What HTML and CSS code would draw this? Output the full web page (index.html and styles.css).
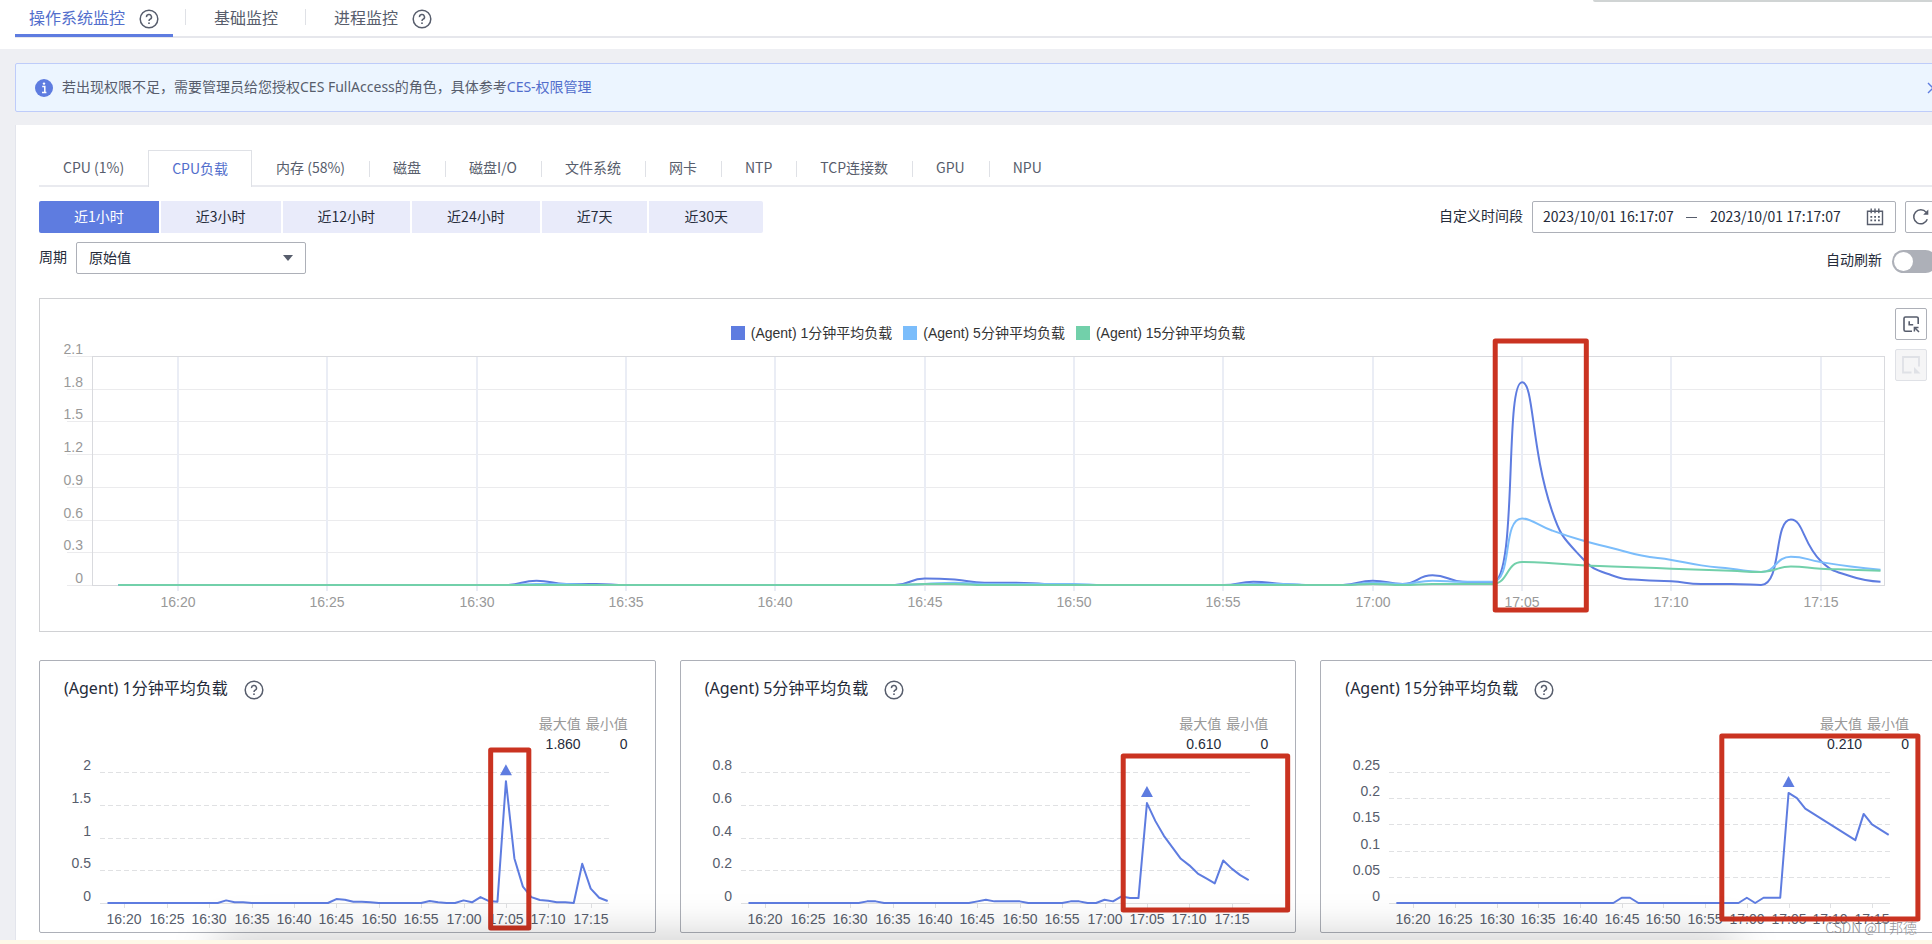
FILE: index.html
```html
<!DOCTYPE html>
<html lang="zh-CN">
<head>
<meta charset="utf-8">
<title>操作系统监控</title>
<link rel="stylesheet" href="styles.css">
</head>
<body>
<svg class="sprite" aria-hidden="true">
  <symbol id="help" viewBox="0 0 20 20">
    <circle cx="10" cy="10" r="8.8" fill="none" stroke="currentColor" stroke-width="1.5"/>
    <path d="M7.5 8.1a2.5 2.5 0 1 1 3.7 2.1c-.8.5-1.2.9-1.2 1.9" fill="none" stroke="currentColor" stroke-width="1.5"/>
    <circle cx="10" cy="14.2" r=".9" fill="currentColor"/>
  </symbol>
</svg>
<div class="float-edge"></div>
<div class="page">
  <header class="top">
    <nav class="top-tabs">
      <a class="top-tab active" href="#os">操作系统监控<svg class="help"><use href="#help"/></svg></a>
      <a class="top-tab" href="#basic">基础监控</a>
      <a class="top-tab" href="#process">进程监控<svg class="help"><use href="#help"/></svg></a>
    </nav>
  </header>

  <main class="content">
    <div class="notice">
      <svg class="info" viewBox="0 0 18 18"><circle cx="9" cy="9" r="9" fill="#5e7ce0"/><circle cx="9" cy="4.6" r="1.2" fill="#fff"/><path d="M7.2 7.6h2.6v5.6M7 13.4h4.400" fill="none" stroke="#fff" stroke-width="1.5"/></svg>
      <p>若出现权限不足，需要管理员给您授权CES FullAccess的角色，具体参考<a href="#ces">CES-权限管理</a></p>
      <button class="close" aria-label="关闭"><svg viewBox="0 0 12 12"><path d="M1 1l10 10M11 1L1 11" stroke="#5e7ce0" stroke-width="1.4"/></svg></button>
    </div>

    <section class="card">
      <ul class="metric-tabs">
        <li><button>CPU (1%)</button></li>
        <li class="active"><button>CPU负载</button></li>
        <li><button>内存 (58%)</button></li>
        <li><button>磁盘</button></li>
        <li><button>磁盘I/O</button></li>
        <li><button>文件系统</button></li>
        <li><button>网卡</button></li>
        <li><button>NTP</button></li>
        <li><button>TCP连接数</button></li>
        <li><button>GPU</button></li>
        <li><button>NPU</button></li>
      </ul>

      <div class="toolbar">
        <div class="ranges">
          <button class="active">近1小时</button>
          <button>近3小时</button>
          <button>近12小时</button>
          <button>近24小时</button>
          <button>近7天</button>
          <button>近30天</button>
        </div>
        <div class="custom">
          <label for="from">自定义时间段</label>
          <div class="dates">
            <input id="from" type="text" value="2023/10/01 16:17:07">
            <span class="dash"></span>
            <input id="to" type="text" value="2023/10/01 17:17:07" aria-label="结束时间">
            <svg class="calendar" viewBox="0 0 18 18" fill="none" stroke="#575d6c"><path d="M1.5 3.2h15v13.3h-15zM5.2.6v4.6M9 .6v4.6M12.8.6v4.6" stroke-width="1.4"/><path d="M4.4 8.8h9.4M4.4 12.4h9.4" stroke-width="1.7" stroke-dasharray="1.8 2"/></svg>
          </div>
          <button class="refresh" aria-label="刷新"><svg viewBox="0 0 18 18"><path d="M15.3 11.3A7 7 0 1 1 14.2 4.400" fill="none" stroke="#575d6c" stroke-width="1.5"/><path d="M16.300 1.600v5.100h-5.100z" fill="#575d6c"/></svg></button>
        </div>
      </div>

      <div class="options">
        <div class="period">
          <label for="period">周期</label>
          <div class="select">
            <select id="period"><option>原始值</option></select>
            <svg viewBox="0 0 10 6"><path d="M0 0h10L5 6z" fill="#575d6c"/></svg>
          </div>
        </div>
        <div class="auto">
          <label for="auto">自动刷新</label>
          <input id="auto" type="checkbox" role="switch">
        </div>
      </div>

      <div class="overview">
        <ul class="legend">
          <li><i class="s1"></i>(Agent) 1分钟平均负载</li>
          <li><i class="s5"></i>(Agent) 5分钟平均负载</li>
          <li><i class="s15"></i>(Agent) 15分钟平均负载</li>
        </ul>
        <svg class="chart chart-main" id="chart-main"></svg>
        <div class="tools">
          <button aria-label="区域缩放"><svg viewBox="0 0 18 18" fill="none" stroke="#575d6c"><path d="M10 16.200H3.500a1.500 1.500 0 0 1-1.500-1.500V3.500A1.500 1.500 0 0 1 3.500 2h11.200a1.500 1.500 0 0 1 1.500 1.500V9M7.200 6.200v3.600h4" stroke-width="1.600"/><path d="M12.500 12.500l4.500 4.500M16.500 12.400h-4.100v4.100" stroke-width="1.500"/></svg></button>
          <button aria-label="区域缩放还原" disabled><svg viewBox="0 0 20 20"><path d="M10.500 17.500H2V2h16v9.500" fill="none" stroke="#dfe1e6" stroke-width="1.800"/><path d="M13 12l6.500 6.500H13z" fill="#dfe1e6"/></svg></button>
        </div>
      </div>

      <div class="details">
        <article class="detail">
          <h2>(Agent) 1分钟平均负载<svg class="help"><use href="#help"/></svg></h2>
          <table><thead><tr><th>最大值</th><th>最小值</th></tr></thead><tbody><tr><td>1.860</td><td>0</td></tr></tbody></table>
          <svg class="chart chart-small" id="chart-1"></svg>
        </article>
        <article class="detail">
          <h2>(Agent) 5分钟平均负载<svg class="help"><use href="#help"/></svg></h2>
          <table><thead><tr><th>最大值</th><th>最小值</th></tr></thead><tbody><tr><td>0.610</td><td>0</td></tr></tbody></table>
          <svg class="chart chart-small" id="chart-5"></svg>
        </article>
        <article class="detail">
          <h2>(Agent) 15分钟平均负载<svg class="help"><use href="#help"/></svg></h2>
          <table><thead><tr><th>最大值</th><th>最小值</th></tr></thead><tbody><tr><td>0.210</td><td>0</td></tr></tbody></table>
          <svg class="chart chart-small" id="chart-15"></svg>
        </article>
      </div>
    </section>
  </main>
</div>
<footer class="strip"></footer>
<div class="watermark">CSDN @IT邦德</div>
<script src="charts.js"></script>
</body>
</html>
```

FILE: styles.css
```css
* { box-sizing: border-box; }

body {
  position: relative;
  min-height: 100vh;
  margin: 0;
  overflow: hidden;
  background: #eeeff3;
  color: #252b3a;
  font: 14px/20px "Noto Sans CJK SC", "Noto Sans", sans-serif;
}

ul, p, h2 { margin: 0; padding: 0; list-style: none; }
a { color: #526ecc; text-decoration: none; }
button, input, select { margin: 0; padding: 0; border: 0; background: none; color: inherit; font: inherit; }
svg { display: block; }

.sprite { position: absolute; width: 0; height: 0; }

.float-edge {
  position: absolute;
  top: 0;
  right: 0;
  width: 339px;
  height: 2px;
  border-bottom-left-radius: 4px;
  background: #d0d4d4;
}

/* The content area runs past the right side of the window. */
.page { margin-right: -28px; }

.top { height: 49px; padding-left: 15px; background: #fff; }
.top-tabs { display: flex; height: 38px; border-bottom: 2px solid #e6e7ec; }
.top-tab { display: flex; align-items: center; gap: 14px; height: 37px; padding: 0 27px 3px 28px; color: #575d6c; font-size: 16px; line-height: 24px; }
.top-tab::before { content: ""; width: 1px; height: 16px; margin: 0 14px 0 -29px; background: #dfe1e6; }
.top-tab + .top-tab { padding-left: 29px; }
.top-tab:nth-child(2) { margin-left: 12px; }
.top-tab.active { padding: 0 14px 3px; box-shadow: inset 0 -3px #5e7ce0; color: #526ecc; }
.top-tab.active::before { display: none; }
.help { flex: none; width: 20px; height: 20px; margin-top: 3px; color: #575d6c; }

.content { padding: 14px 0 0 15px; }

.notice { display: flex; align-items: center; height: 49px; margin-bottom: 13px; padding: 0 20px 0 19px; border: 1px solid #beccfa; border-radius: 2px; background: #ecf5ff; color: #575d6c; font-family: "Noto Sans", "Noto Sans CJK SC", sans-serif; }
.notice p { padding-bottom: 2px; }
.info { width: 18px; height: 18px; margin-right: 9px; }
.close { margin-left: auto; }
.close svg { width: 12px; height: 12px; }

.card { padding: 25px 23px 7px; border-left: 1px solid #e3e5ec; background: #fff; }

.metric-tabs { display: flex; height: 37px; border-bottom: 2px solid #e9eaef; color: #575d6c; }
.metric-tabs li { display: flex; align-items: center; height: 37px; }
.metric-tabs li::before { content: ""; width: 1px; height: 16px; margin-right: -1px; background: #dfe1e6; }
.metric-tabs li:nth-child(-n+3)::before { display: none; }
.metric-tabs button { height: 36px; padding: 0 24px 3px; }
.metric-tabs li.active { border: 1px solid #dfe1e6; border-bottom: 0; background: #fff; color: #526ecc; }
.metric-tabs li.active button { padding: 0 23px 3px; }

.toolbar, .options { display: flex; justify-content: space-between; }
.toolbar { margin-top: 14px; }
.ranges { display: flex; gap: 2px; }
.ranges button { height: 32px; padding: 0 35px 2px; background: #e9ebfa; }
.ranges button.active { border-radius: 2px 0 0 2px; background: #5e7ce0; color: #fff; }
.ranges button:last-child { border-radius: 0 2px 2px 0; }

.custom { display: flex; gap: 9px; }
.custom label { line-height: 28px; }
.dates { display: flex; align-items: center; width: 364px; height: 32px; padding: 0 11px 0 10px; border: 1px solid #adb0b8; border-radius: 2px; }
.dates input { width: 134px; height: 28px; padding-bottom: 2px; }
.dates .dash { width: 11px; height: 1px; margin: 0 13px 0 9px; background: #575d6c; }
.calendar { width: 18px; height: 18px; margin-left: auto; }
.refresh { display: grid; place-items: center; width: 32px; height: 32px; border: 1px solid #adb0b8; border-radius: 2px; }
.refresh svg { width: 18px; height: 18px; }

.options { margin-top: 9px; }
.period { display: flex; gap: 9px; }
.period label { line-height: 28px; }
.select { display: flex; align-items: center; width: 230px; height: 32px; border: 1px solid #adb0b8; border-radius: 2px; }
.select select { flex: 1; height: 30px; margin-right: -22px; padding: 0 32px 2px 12px; appearance: none; }
.select svg { width: 10px; height: 6px; margin-right: 12px; pointer-events: none; }
.auto { display: flex; gap: 10px; padding-top: 8px; }
.auto label { line-height: 18px; }
.auto input { display: flex; align-items: center; width: 45px; height: 23px; padding: 2px; border-radius: 12px; background: #adb0b8; appearance: none; }
.auto input::before { content: ""; width: 19px; height: 19px; border-radius: 50%; background: #fff; }

.overview { position: relative; margin-top: 24px; padding-top: 24px; border: 1px solid #d0d1d4; }
.legend { display: flex; justify-content: center; gap: 11px; color: #333; font-family: "Liberation Sans", "Noto Sans CJK SC", sans-serif; }
.legend li { display: flex; align-items: center; gap: 6px; }
.legend i { width: 14px; height: 14px; }
.s1 { background: #5e7ce0; }
.s5 { background: #7bbdfb; }
.s15 { background: #72d0aa; }
.tools { position: absolute; top: 9px; right: 9px; display: grid; gap: 9px; }
.tools button { display: grid; place-items: center; width: 32px; height: 32px; border: 1px solid #adb0b8; border-radius: 2px; }
.tools button:disabled { border-color: #dfe1e6; background: #f5f5f6; }
.tools svg { width: 18px; height: 18px; }
.tools button:disabled svg { width: 20px; height: 20px; }

.details { display: grid; grid-template-columns: repeat(3, minmax(0, 1fr)); gap: 24px; margin-top: 28px; }
.detail { padding-top: 15px; border: 1px solid #adb0b8; border-radius: 2px; }
.detail h2 { display: flex; align-items: center; gap: 16px; padding-left: 24px; font-family: "Noto Sans", "Noto Sans CJK SC", sans-serif; font-size: 16px; font-weight: 400; line-height: 24px; }
.detail table { margin: 14px 27px 0 auto; border-collapse: collapse; font-family: "Liberation Sans", "Noto Sans CJK SC", sans-serif; text-align: right; }
.detail th, .detail td { height: 20px; padding: 0 0 0 5px; line-height: 20px; }
.detail th { color: #999; font-weight: 400; }

.chart { width: 100%; overflow: visible; font-family: "Liberation Sans", sans-serif; font-size: 14px; }
.chart-main { height: 288px; }
.chart-small { height: 178px; }
.chart text { fill: #575d6c; }
.chart-main text { fill: #999; }
.chart line { stroke: #e0e1e3; shape-rendering: crispEdges; }
.chart .dashed { stroke-dasharray: 5 3; }
.chart-main line { stroke: #ebebed; }
.chart-main .column { stroke: #eaedf5; stroke-width: 2; }
.chart .frame { fill: none; stroke: #d9dade; shape-rendering: crispEdges; }
.chart .series { fill: none; stroke-width: 2; stroke-linejoin: round; }
.chart .peak { fill: #5e7ce0; }
.chart .mark { fill: none; stroke: #ca3321; stroke-width: 5; stroke-linejoin: round; }

.strip { position: relative; height: 4px; background: #fef9e8; }
.strip::before { content: ""; position: absolute; inset: 4px 200px 0 220px; height: 20px; box-shadow: 0 0 44px 4px rgba(0, 0, 0, .28); }
.strip::after { content: ""; position: absolute; inset: 0; background: #fef9e8; }

.watermark { position: absolute; right: 15px; bottom: 7px; color: #8d8d92; font: 14px/20px "Noto Sans CJK SC", sans-serif; font-weight: 300; }
```

FILE: charts.js
```javascript
const COUNT = 60;          // one sample per minute, 16:18 to 17:17
const FIRST_OFFSET = 0.883; // minutes between the range start and the first sample

function series(values) {
  const out = new Array(COUNT).fill(0);
  for (const [start, list] of values) list.forEach((v, i) => { out[start + i] = v; });
  return out;
}

const load1 = series([[14, [.04, .01, .01]], [27, [.06, .05, .02, .02, .01]], [38, [.03, .01]],
  [42, [.04, .01, .09, .03, .02, 1.86, .68, .25, .09, .045, .035, .01, .01, 0, .6, .22, .08, .03]]]);
const load5 = series([[14, [.01, .01]], [27, [.01, .02, .01, .01, .01, .01]], [38, [.01, .01]],
  [42, [.02, .01, .04, .03, .03, .61, .5, .41, .34, .27, .23, .18, .15, .12, .26, .21, .17, .14]]]);
const load15 = series([[27, [.01, .01]],
  [42, [.01, 0, .01, .01, .01, .21, .2, .18, .17, .16, .15, .14, .13, .12, .17, .15, .14, .13]]]);

function straight(p) {
  return 'M' + p.map(q => q.join(' ')).join('L');
}

/* Rounded curve whose control points never leave the span of their neighbours. */
function smooth(p) {
  const within = (v, a, b) => Math.max(Math.min(v, Math.max(a, b)), Math.min(a, b));
  let d = 'M' + p[0].join(' ');
  let out = p[0];
  for (let i = 1; i < p.length; i++) {
    const a = p[i - 1], b = p[i], c = p[i + 1];
    let inn = b, next = b;
    if (c) {
      const la = Math.hypot(b[0] - a[0], b[1] - a[1]);
      const lc = Math.hypot(c[0] - b[0], c[1] - b[1]);
      const k = 0.5 * lc / (la + lc);
      next = [0, 1].map(n => within(b[n] + (c[n] - a[n]) * k, b[n], c[n]));
      inn = [0, 1].map(n => within(b[n] - (next[n] - b[n]) * la / lc, a[n], b[n]));
      next = [0, 1].map(n => within(b[n] + (b[n] - inn[n]) * lc / la, b[n], c[n]));
    }
    d += 'C' + [...out, ...inn, ...b].join(' ');
    out = next;
  }
  return d;
}

function draw(id, o) {
  const svg = document.getElementById(id);
  const width = svg.getBoundingClientRect().width;
  const right = width - o.right;
  const x = i => o.left + (i + FIRST_OFFSET) * (right - o.left) / 60;
  const y = v => o.bottom - v / o.max * (o.bottom - o.top);
  const line = (x1, y1, x2, y2, c = '') => `<line class="${c}" x1="${x1}" y1="${y1}" x2="${x2}" y2="${y2}"/>`;
  let s = '';

  o.ticks.forEach(v => {
    const py = Math.round(y(v)) + .5;
    s += line(o.left - (o.overhang || 0), py, right, py, o.framed || v === 0 ? '' : 'dashed');
    s += `<text x="${o.left - 9}" y="${py - 3}" text-anchor="end">${v}</text>`;
  });
  for (let i = 2; i < COUNT; i += 5) {
    const minutes = 16 * 60 + 18 + i;
    const label = Math.floor(minutes / 60) + ':' + String(minutes % 60).padStart(2, '0');
    const px = Math.round(x(i));
    s += o.framed ? line(px, o.top, px, o.bottom + 6, 'column') : line(px, o.bottom, px, o.bottom + 5);
    s += `<text x="${px}" y="${o.bottom + (o.framed ? 22 : 21)}" text-anchor="middle">${label}</text>`;
  }
  if (o.framed) s += `<rect class="frame" x="${o.left}" y="${o.top}" width="${right - o.left}" height="${o.bottom - o.top}"/>`;
  o.lines.forEach(([data, color]) => {
    const points = data.map((v, i) => [x(i), y(v)]);
    s += `<path class="series" stroke="${color}" d="${o.framed ? smooth(points) : straight(points)}"/>`;
  });
  if (!o.framed) {
    const data = o.lines[0][0];
    const top = Math.max(...data);
    const px = x(data.indexOf(top)), py = y(top) - 6;
    s += `<path class="peak" d="M${px - 6} ${py}h12l-6-11z"/>`;
  }
  const [from, to, y1, y2] = o.mark;
  s += `<rect class="mark" x="${x(from)}" y="${y1}" width="${x(to) - x(from)}" height="${y2 - y1}"/>`;
  svg.innerHTML = s;
}

function render() {
  draw('chart-main', { left: 52, right: 52, top: 13, bottom: 242, overhang: 25, max: 2.1, framed: true,
    ticks: [0, .3, .6, .9, 1.2, 1.5, 1.8, 2.1],
    lines: [[load1, '#5e7ce0'], [load5, '#7bbdfb'], [load15, '#72d0aa']], mark: [46.1, 49.15, -2, 267] });
  const small = { right: 46, top: 18, bottom: 149 };
  draw('chart-1', { ...small, left: 60, max: 2, ticks: [0, .5, 1, 1.5, 2],
    lines: [[load1, '#5e7ce0']], mark: [45.2, 49.7, -4, 174] });
  draw('chart-5', { ...small, left: 60, max: .8, ticks: [0, .2, .4, .6, .8],
    lines: [[load5, '#5e7ce0']], mark: [44.2, 63.6, 2, 156] });
  draw('chart-15', { ...small, left: 68, max: .25, ticks: [0, .05, .1, .15, .2, .25],
    lines: [[load15, '#5e7ce0']], mark: [39, 62.5, -18, 165] });
}

render();
window.addEventListener('resize', render);
```
